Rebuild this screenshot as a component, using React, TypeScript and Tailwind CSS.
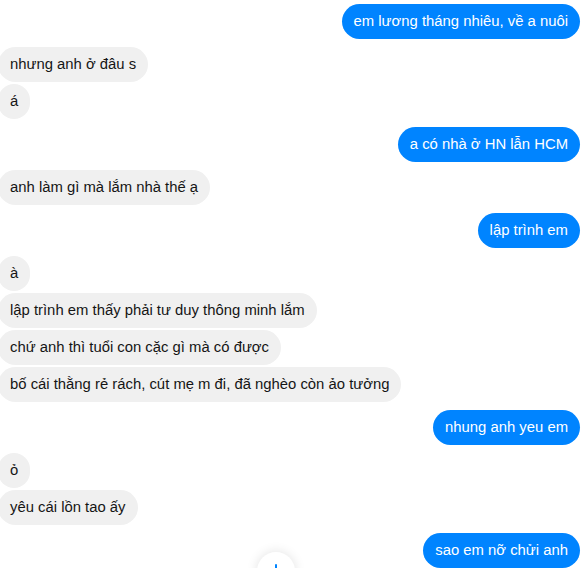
import React from "react";

type Msg = { text: string; me: boolean };

const groups: Msg[][] = [
  [{ text: "em lương tháng nhiêu, về a nuôi", me: true }],
  [
    { text: "nhưng anh ở đâu s", me: false },
    { text: "á", me: false },
  ],
  [{ text: "a có nhà ở HN lẫn HCM", me: true }],
  [{ text: "anh làm gì mà lắm nhà thế ạ", me: false }],
  [{ text: "lập trình em", me: true }],
  [
    { text: "à", me: false },
    { text: "lập trình em thấy phải tư duy thông minh lắm", me: false },
    { text: "chứ anh thì tuổi con cặc gì mà có được", me: false },
    { text: "bố cái thằng rẻ rách, cút mẹ m đi, đã nghèo còn ảo tưởng", me: false },
  ],
  [{ text: "nhung anh yeu em", me: true }],
  [
    { text: "ỏ", me: false },
    { text: "yêu cái lồn tao ấy", me: false },
  ],
  [{ text: "sao em nỡ chửi anh", me: true }],
];

export default function App() {
  return (
    <div
      className="relative w-[588px] h-[568px] overflow-hidden bg-white"
      style={{ fontFamily: '"Liberation Sans", Arial, sans-serif' }}
    >
      <div className="flex flex-col pt-[4px] pr-[8px]">
        {groups.map((g, gi) => (
          <div
            key={gi}
            className={`flex flex-col gap-[2px] ${gi > 0 ? "mt-[8px]" : ""} ${
              g[0].me ? "items-end" : "items-start -ml-[2px]"
            }`}
          >
            {g.map((m, mi) => (
              <div
                key={mi}
                className={`rounded-[18px] px-[12px] py-[8px] text-[14.85px] leading-[19px] whitespace-nowrap ${
                  m.me ? "bg-[#0084ff] text-white" : "bg-[#f0f0f0] text-[#151515]"
                }`}
              >
                {m.text}
              </div>
            ))}
          </div>
        ))}
      </div>
      <div className="absolute left-[257px] top-[552px] w-[38px] h-[38px] rounded-full bg-white shadow-[0_0_12px_rgba(0,0,0,0.12)] flex justify-center">
        <div className="mt-[12px] w-[2px] h-[12px] bg-[#0084ff] rounded-sm" />
      </div>
    </div>
  );
}
